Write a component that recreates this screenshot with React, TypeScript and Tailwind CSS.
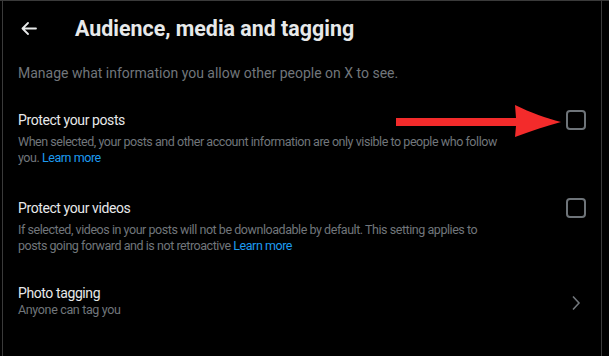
import React from "react";

function Checkbox() {
  return <div className="w-[20px] h-[20px] rounded-[4px] border-2 border-[#6e7479] shrink-0" />;
}

export default function App() {
  return (
    <div className="w-[609px] h-[356px] bg-black border-t border-[#3a3a3a] overflow-hidden" style={{ fontFamily: "Roboto, 'Liberation Sans', sans-serif" }}>
      <div className="ml-[2px] w-[600px] h-full border-l border-r border-[#3a3a3a] relative">
        {/* Header */}
        <div className="h-[55px] flex items-center pl-[18px]">
          <svg width="16" height="13" viewBox="0 0 16 13" className="shrink-0">
            <path d="M15 6.5H2M7 1L1.5 6.5L7 12" stroke="#e7e9ea" strokeWidth="1.8" fill="none" strokeLinecap="round" strokeLinejoin="round" />
          </svg>
          <h1 className="ml-[38px] text-[21.4px] font-bold text-[#e7e9ea] leading-[24px]">Audience, media and tagging</h1>
        </div>
        {/* Subtitle */}
        <div className="pt-[7px] px-[15px] text-[14px] leading-[20px] text-[#71767b]">
          Manage what information you allow other people on X to see.
        </div>
        {/* Row 1 */}
        <div className="mt-[27px] px-[15px] flex items-start justify-between">
          <div className="w-[520px]">
            <div className="text-[14px] leading-[20px] text-[#e7e9ea] tracking-[-0.4px]">Protect your posts</div>
            <div className="mt-[4px] text-[12.5px] leading-[16px] text-[#71767b] tracking-[-0.45px]">
              When selected, your posts and other account information are only visible to people who follow
              <br />
              you. <span className="text-[#1d9bf0]">Learn more</span>
            </div>
          </div>
          <Checkbox />
        </div>
        {/* Row 2 */}
        <div className="mt-[32px] px-[15px] flex items-start justify-between">
          <div className="w-[520px]">
            <div className="text-[14px] leading-[20px] text-[#e7e9ea] tracking-[-0.4px]">Protect your videos</div>
            <div className="mt-[4px] text-[12.5px] leading-[16px] text-[#71767b] tracking-[-0.45px]">
              If selected, videos in your posts will not be downloadable by default. This setting applies to
              <br />
              posts going forward and is not retroactive <span className="text-[#1d9bf0]">Learn more</span>
            </div>
          </div>
          <Checkbox />
        </div>
        {/* Row 3 */}
        <div className="mt-[30px] px-[15px] flex items-center justify-between">
          <div>
            <div className="text-[14px] leading-[18px] text-[#e7e9ea] tracking-[-0.4px]">Photo tagging</div>
            <div className="text-[12.5px] leading-[16px] text-[#71767b] tracking-[-0.35px]">Anyone can tag you</div>
          </div>
          <svg width="10" height="16" viewBox="0 0 10 16" className="mr-[5px] mt-[4px]">
            <path d="M2 1.5L8 8L2 14.5" stroke="#71767b" strokeWidth="1.6" fill="none" />
          </svg>
        </div>
        {/* Red arrow annotation */}
        <svg className="absolute left-[388px] top-[102px]" width="175" height="36" viewBox="0 0 175 36">
          <path d="M5 15H125L124 2C140 10 155 15 170 19C155 23 140 28 124 34L125 23H5Z" fill="#f32b2b" />
        </svg>
      </div>
    </div>
  );
}
